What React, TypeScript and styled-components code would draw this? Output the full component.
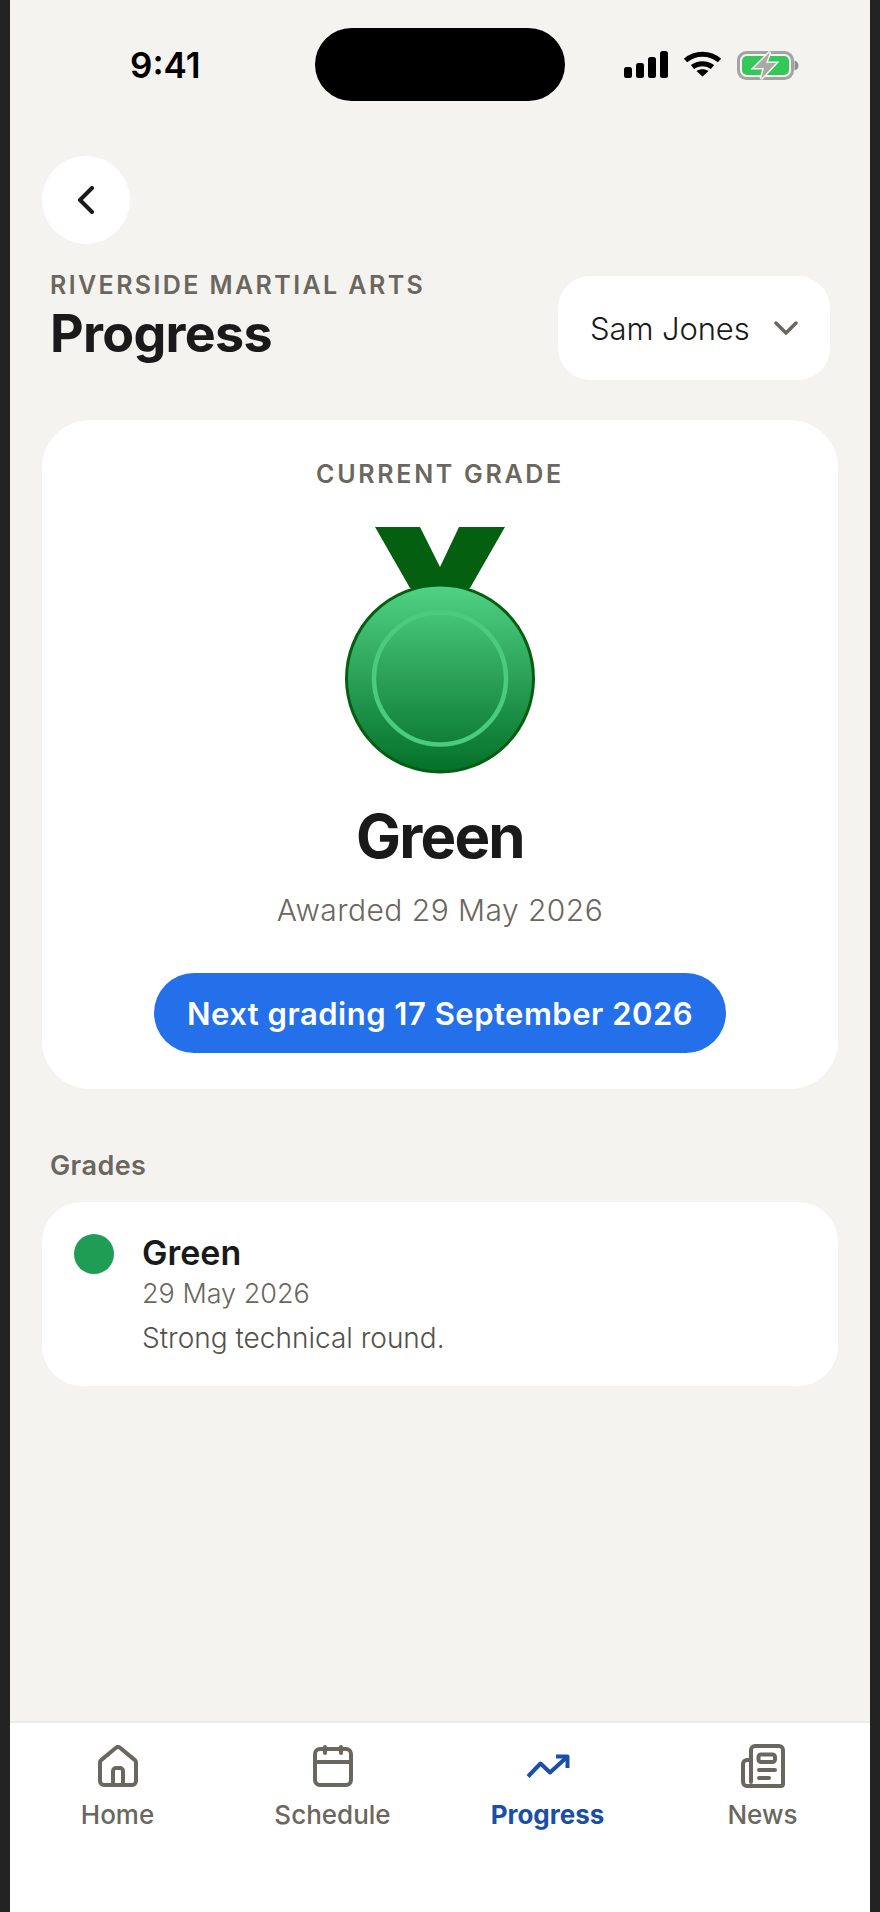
import React from 'react';
import styled, { createGlobalStyle } from 'styled-components';

const GlobalStyle = createGlobalStyle`
  html, body {
    margin: 0;
    padding: 0;
    background: #232323;
  }
  * {
    box-sizing: border-box;
  }
`;

const fontStack = `Inter, "Noto Sans", sans-serif`;
const ink = '#1a1a1a';
const muted = '#6b665e';

const Frame = styled.div`
  width: 880px;
  height: 1912px;
  padding: 0 10px;
  background: #232323;
  font-family: ${fontStack};
`;

const Screen = styled.div`
  height: 100%;
  display: flex;
  flex-direction: column;
  background: #f4f3ef;
`;

const StatusBar = styled.div`
  display: grid;
  grid-template-columns: 305px 250px 305px;
  height: 156px;
  padding-top: 28px;
  flex: none;
`;

const Clock = styled.div`
  padding: 17px 0 0 120px;
  font-size: 35px;
  line-height: 40px;
  font-weight: 600;
  color: #000;
`;

const Island = styled.div`
  height: 73px;
  border-radius: 37px;
  background: #000;
`;

const StatusIcons = styled.div`
  display: flex;
  align-items: flex-start;
  padding: 23px 0 0 59px;
  gap: 15px;
`;

const Content = styled.main`
  flex: 1;
  padding: 0 32px;
`;

const BackButton = styled.button`
  display: flex;
  align-items: center;
  justify-content: center;
  width: 88px;
  height: 88px;
  padding: 0;
  border: 0;
  border-radius: 50%;
  background: #fff;
`;

const HeaderRow = styled.header`
  display: flex;
  justify-content: space-between;
  align-items: flex-start;
  padding: 23px 8px 0;
`;

const Eyebrow = styled.div`
  font-size: 25px;
  line-height: 36px;
  font-weight: 600;
  letter-spacing: 2.4px;
  color: ${muted};
`;

const Title = styled.h1`
  margin: 0;
  font-size: 52px;
  line-height: 62px;
  font-weight: 700;
  letter-spacing: -0.7px;
  color: ${ink};
`;

const Select = styled.div`
  display: flex;
  align-items: center;
  justify-content: space-between;
  width: 272px;
  height: 104px;
  margin-top: 9px;
  padding: 0 32px;
  border-radius: 32px;
  background: #fff;
  font-size: 31px;
  font-weight: 300;
  letter-spacing: -0.1px;
  color: ${ink};
`;

const GradeCard = styled.section`
  display: flex;
  flex-direction: column;
  align-items: center;
  height: 669px;
  margin-top: 40px;
  padding-top: 38px;
  border-radius: 48px;
  background: #fff;
`;

const CardLabel = styled.div`
  font-size: 25px;
  line-height: 32px;
  font-weight: 600;
  letter-spacing: 2.7px;
  color: ${muted};
`;

const Medal = styled.svg`
  margin-top: 37px;
  flex: none;
`;

const GradeName = styled.h2`
  margin: 27px 0 0;
  font-size: 60px;
  line-height: 68px;
  font-weight: 700;
  letter-spacing: -1.8px;
  color: ${ink};
`;

const Awarded = styled.div`
  margin-top: 20px;
  font-size: 30px;
  line-height: 40px;
  font-weight: 300;
  letter-spacing: 0.45px;
  color: ${muted};
`;

const NextPill = styled.div`
  display: flex;
  align-items: center;
  justify-content: center;
  width: 572px;
  height: 80px;
  margin-top: 43px;
  border-radius: 40px;
  background: #2470ea;
  font-size: 31px;
  font-weight: 600;
  letter-spacing: 0.5px;
  color: #fff;
`;

const SectionTitle = styled.h3`
  margin: 59px 0 0 8px;
  font-size: 27px;
  line-height: 36px;
  font-weight: 600;
  letter-spacing: 0.4px;
  color: ${muted};
`;

const GradeList = styled.section`
  display: flex;
  gap: 28px;
  height: 184px;
  margin-top: 18px;
  padding: 32px;
  border-radius: 40px;
  background: #fff;
`;

const Dot = styled.span<{ $color: string }>`
  width: 40px;
  height: 40px;
  flex: none;
  border-radius: 50%;
  background: ${p => p.$color};
`;

const EntryName = styled.div`
  margin-top: -3px;
  font-size: 34px;
  line-height: 44px;
  font-weight: 600;
  color: ${ink};
`;

const EntryDate = styled.div`
  font-size: 27px;
  line-height: 38px;
  font-weight: 300;
  color: ${muted};
`;

const EntryNote = styled.div`
  margin-top: 6px;
  font-size: 28px;
  line-height: 38px;
  font-weight: 300;
  letter-spacing: 0;
  color: #55514a;
`;

const TabBar = styled.nav`
  display: grid;
  grid-template-columns: repeat(4, 1fr);
  height: 191px;
  flex: none;
  border-top: 2px solid #ecebe7;
  background: #fff;
`;

const Tab = styled.div<{ $active?: boolean }>`
  display: flex;
  flex-direction: column;
  align-items: center;
  padding-top: 21px;
  font-size: 26px;
  line-height: 32px;
  font-weight: ${p => (p.$active ? 700 : 500)};
  color: ${p => (p.$active ? '#1a4fa8' : muted)};
`;

const TabIcon = styled.div`
  display: flex;
  align-items: center;
  justify-content: center;
  height: 44px;
  margin-bottom: 11px;
`;

const SignalIcon = () => (
  <svg width="44" height="27" viewBox="0 0 44 27" fill="#000">
    <rect x="0" y="16" width="8" height="11" rx="2.5" />
    <rect x="12" y="12" width="8" height="15" rx="2.5" />
    <rect x="24" y="6" width="8" height="21" rx="2.5" />
    <rect x="36" y="0" width="8" height="27" rx="2.5" />
  </svg>
);

const WifiIcon = () => (
  <svg width="39" height="26" viewBox="0 0 39 26" fill="none" stroke="#000" strokeWidth="5">
    <path d="M2.5 9.5C12 1 27 1 36.5 9.5" />
    <path d="M9.5 16C15 11.5 24 11.5 29.5 16" />
    <path d="M19.5 25.5L13.5 20C17 17.5 22 17.5 25.5 20Z" fill="#000" stroke="none" />
  </svg>
);

const BatteryIcon = () => (
  <svg width="62" height="29" viewBox="0 0 62 29" fill="none">
    <rect x="1.5" y="1.5" width="54" height="26" rx="8" stroke="#a3a3a1" strokeWidth="3" />
    <rect x="5" y="5" width="47" height="19" rx="5" fill="#34c759" />
    <path d="M57.5 9.5c2.500.5 4 2.500 4 5s-1.500 4.500-4 5z" fill="#8f8f8d" />
    <path d="M33 1L17 17h10l-3 11 15-16H29z" fill="#a9a9a7" stroke="#f4f3ef" strokeWidth="3" paintOrder="stroke" />
  </svg>
);

const BackChevron = () => (
  <svg width="18" height="28" viewBox="0 0 18 28" fill="none" stroke={ink} strokeWidth="4" strokeLinecap="round" strokeLinejoin="round">
    <path d="M15 2L3 14l12 12" />
  </svg>
);

const SelectChevron = () => (
  <svg width="24" height="14" viewBox="0 0 24 14" fill="none" stroke={muted} strokeWidth="3.5" strokeLinecap="round" strokeLinejoin="round">
    <path d="M2 2l10 10L22 2" />
  </svg>
);

const iconStroke = {
  fill: 'none',
  strokeWidth: 4,
  strokeLinecap: 'round',
  strokeLinejoin: 'round',
} as const;

const HomeIcon = () => (
  <svg width="40" height="42" viewBox="0 0 40 42" stroke={muted} {...iconStroke}>
    <path d="M2 17.500a3 3 0 0 1 1.100-2.400L18 2.800a3 3 0 0 1 4 0l14.900 12.300a3 3 0 0 1 1.100 2.400V36a4 4 0 0 1-4 4H6a4 4 0 0 1-4-4z" />
    <path d="M15 40V26a3 3 0 0 1 3-3h4a3 3 0 0 1 3 3v14" />
  </svg>
);

const CalendarIcon = () => (
  <svg width="40" height="42" viewBox="0 0 40 42" stroke={muted} {...iconStroke}>
    <rect x="2" y="4" width="36" height="36" rx="5" />
    <path d="M2 17h36M12 2v6M28 2v6" />
  </svg>
);

const TrendIcon = () => (
  <svg width="44" height="25" viewBox="0 0 44 25" stroke="#1a4fa8" {...iconStroke}>
    <path d="M2 22.500L14.500 9.500 24 18.500 41.500 2.500" strokeLinecap="butt" />
    <path d="M30 2.500h11.500V14" strokeLinecap="butt" />
  </svg>
);

const NewsIcon = () => (
  <svg width="44" height="44" viewBox="0 0 44 44" stroke={muted} {...iconStroke}>
    <path d="M10 38V6a4 4 0 0 1 4-4h24a4 4 0 0 1 4 4v34a2 2 0 0 1-2 2H6" />
    <path d="M10 16H6a4 4 0 0 0-4 4v18a4 4 0 0 0 4 4h4" />
    <rect x="17.500" y="10.500" width="16.500" height="7.500" rx="2.500" />
    <path d="M18 26h16M18 34h10" />
  </svg>
);

const MedalIcon = () => (
  <Medal width="192" height="248" viewBox="0 0 192 248">
    <defs>
      <linearGradient id="medalFill" x1="0" y1="0" x2="0" y2="1">
        <stop offset="0" stopColor="#50d284" />
        <stop offset="1" stopColor="#04702a" />
      </linearGradient>
    </defs>
    <path d="M31 0h45l20 40 19-40h46l-35 61H66z" fill="#045f10" />
    <circle cx="96" cy="151.500" r="93.500" fill="url(#medalFill)" stroke="#045f10" strokeWidth="3" />
    <circle cx="96" cy="151.500" r="66" fill="none" stroke="#4ccb7f" strokeWidth="4.500" />
  </Medal>
);

const tabs = [
  { label: 'Home', icon: <HomeIcon /> },
  { label: 'Schedule', icon: <CalendarIcon /> },
  { label: 'Progress', icon: <TrendIcon />, active: true },
  { label: 'News', icon: <NewsIcon /> },
];

const App: React.FunctionComponent = () => (
  <Frame>
    <GlobalStyle />
    <Screen>
      <StatusBar>
        <Clock>9:41</Clock>
        <Island />
        <StatusIcons>
          <SignalIcon />
          <WifiIcon />
          <BatteryIcon />
        </StatusIcons>
      </StatusBar>
      <Content>
        <BackButton aria-label="Back">
          <BackChevron />
        </BackButton>
        <HeaderRow>
          <div>
            <Eyebrow>RIVERSIDE MARTIAL ARTS</Eyebrow>
            <Title>Progress</Title>
          </div>
          <Select>
            Sam Jones
            <SelectChevron />
          </Select>
        </HeaderRow>
        <GradeCard>
          <CardLabel>CURRENT GRADE</CardLabel>
          <MedalIcon />
          <GradeName>Green</GradeName>
          <Awarded>Awarded 29 May 2026</Awarded>
          <NextPill>Next grading 17 September 2026</NextPill>
        </GradeCard>
        <SectionTitle>Grades</SectionTitle>
        <GradeList>
          <Dot $color="#1f9d55" />
          <div>
            <EntryName>Green</EntryName>
            <EntryDate>29 May 2026</EntryDate>
            <EntryNote>Strong technical round.</EntryNote>
          </div>
        </GradeList>
      </Content>
      <TabBar>
        {tabs.map(tab => (
          <Tab key={tab.label} $active={tab.active}>
            <TabIcon>{tab.icon}</TabIcon>
            {tab.label}
          </Tab>
        ))}
      </TabBar>
    </Screen>
  </Frame>
);

export default App;
